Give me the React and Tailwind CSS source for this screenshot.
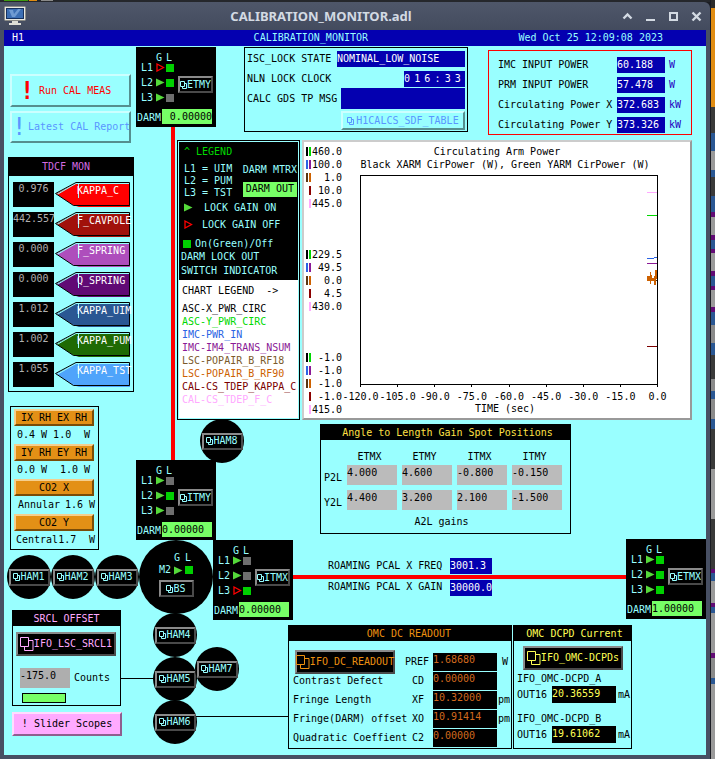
import React, { useState } from 'react';
import { clsx } from 'clsx';

const kappas = [
  { name: 'KAPPA_C', value: '0.976', fill: '#ff0000' },
  { name: 'F_CAVPOLE', value: '442.557', fill: '#a1110b' },
  { name: 'F_SPRING', value: '0.000', fill: '#ae4ebc' },
  { name: 'Q_SPRING', value: '0.000', fill: '#610a75' },
  { name: 'KAPPA_UIM', value: '1.012', fill: '#2a5793' },
  { name: 'KAPPA_PUM', value: '1.002', fill: '#1f6a04' },
  { name: 'KAPPA_TST', value: '1.055', fill: '#4fa4fb' },
];

const powers = [
  { label: 'IMC INPUT POWER', value: '60.188', unit: 'W' },
  { label: 'PRM INPUT POWER', value: '57.478', unit: 'W' },
  { label: 'Circulating Power X', value: '372.683', unit: 'kW' },
  { label: 'Circulating Power Y', value: '373.326', unit: 'kW' },
];

const chartLegend = [
  { name: 'ASC-X_PWR_CIRC', color: 'text-black' },
  { name: 'ASC-Y_PWR_CIRC', color: 'text-[#00d800]' },
  { name: 'IMC-PWR_IN', color: 'text-[#2a63e4]' },
  { name: 'IMC-IM4_TRANS_NSUM', color: 'text-[#8b1a96]' },
  { name: 'LSC-POPAIR_B_RF18', color: 'text-[#7b5a2b]' },
  { name: 'LSC-POPAIR_B_RF90', color: 'text-[#cd6100]' },
  { name: 'CAL-CS_TDEP_KAPPA_C', color: 'text-[#7b0000]' },
  { name: 'CAL-CS_TDEP_F_C', color: 'text-[#ffaaff]' },
];

const scaleBars = [
  ['bg-black', 'bg-[#00d800]'],
  ['bg-[#2a63e4]', 'bg-[#8b1a96]'],
  ['bg-[#5a3410]', 'bg-[#cd6100]'],
  ['bg-transparent', 'bg-[#8b0000]'],
  ['bg-transparent', 'bg-[#ffaaff]'],
];

const scales = [
  ['460.0', '100.0', '1.0', '10.0', '445.0'],
  ['229.5', '49.5', '0.0', '4.5', '430.0'],
  ['-1.0', '-1.0', '-1.0', '-1.0', '415.0'],
];

const times = ['-120.0', '-105.0', '-90.0', '-75.0', '-60.0', '-45.0', '-30.0', '-15.0', '0.0'];

const readouts = [
  { label: 'Contrast Defect', symbol: 'CD ', value: '0.00000', unit: '' },
  { label: 'Fringe Length', symbol: 'XF ', value: '10.32000', unit: 'pm' },
  { label: 'Fringe(DARM) offset', symbol: 'XO ', value: '10.91414', unit: 'pm' },
  { label: 'Quadratic Coeffient', symbol: 'C2 ', value: '0.00000', unit: '' },
];

// windows that peek out behind the right edge: [color, height]
const backdrop = [
  ['#2b2b2b', 8], ['#e08c12', 99], ['#3a3a3a', 26], ['#2a5793', 18], ['#9a9a9a', 19],
  ['#2a5793', 7], ['#3a3a3a', 19], ['#2a5793', 16], ['#610a75', 5], ['#9a9a9a', 18],
  ['#610a75', 5], ['#2a5793', 9], ['#610a75', 4], ['#9a9a9a', 18], ['#610a75', 5],
  ['#2a5793', 10], ['#610a75', 4], ['#9a9a9a', 17], ['#610a75', 5], ['#2a5793', 13],
  ['#8a8a8a', 18], ['#2a5793', 12], ['#3a3a3a', 24], ['#8a8a8a', 12], ['#2a5793', 8],
  ['#8a8a8a', 20], ['#2a5793', 10], ['#3a3a3a', 40], ['#9a9a9a', 50], ['#3a3a3a', 50],
  ['#610a75', 4], ['#2a5793', 8], ['#9a9a9a', 22], ['#610a75', 4], ['#2a5793', 6],
  ['#9a9a9a', 40], ['#610a75', 5], ['#8a8a8a', 20], ['#2a5793', 6], ['#9a9a9a', 75],
];

function DisplayIcon({ large }) {
  if (large) {
    return (
      <svg width="14" height="14" viewBox="0 0 14 14" fill="none" stroke="currentColor" className="shrink-0" aria-hidden="true">
        <path d="M.5 .5H8.5V9.5H.5ZM9 3.5H13V13.5H4.5V10" />
      </svg>
    );
  }
  return (
    <svg width="7" height="8" viewBox="0 0 7 8" fill="none" stroke="currentColor" className="shrink-0" aria-hidden="true">
      <path d="M.5 .5H4.5V5.5H.5ZM5 2.5H6.5V7.5H2.5V6" />
    </svg>
  );
}

function OpticButton({ name, className }) {
  return (
    <button
      className={clsx(
        'flex h-[17px] items-center justify-center border-2 border-t-[#8a8a8a] border-l-[#8a8a8a] border-r-[#4a4a4a] border-b-[#4a4a4a] bg-black text-[#99ffff]',
        className
      )}
    >
      <DisplayIcon />
      {name}
    </button>
  );
}

function GainArrow({ on }) {
  return (
    <svg width="9" height="9" viewBox="0 0 9 9" aria-hidden="true">
      {on ? (
        <path d="M0 .5L8.5 4.5L0 8.5Z" fill="#55d93a" />
      ) : (
        <path d="M1 1L7.5 4.5L1 8Z" fill="none" stroke="#ff0000" strokeWidth="1.3" />
      )}
    </svg>
  );
}

function Lamp({ on }) {
  return <span className={clsx('size-2', on ? 'bg-[#00d000]' : 'bg-[#6e6e6e]')} />;
}

function Suspension({ name, gains, locks, darm, align, className }) {
  return (
    <section className={clsx('absolute flex size-20 flex-col bg-black pt-1 text-[#99ffff]', className)}>
      <div className="flex items-end justify-between pr-[3px] pl-[5px]">
        <div>
          <div className="grid h-[9px] grid-cols-[14px_9px_8px] items-center gap-x-px">
            <span className="col-start-2">G</span>
            <span>L</span>
          </div>
          {gains.map((on, i) => (
            <div key={i} className="grid h-[15px] grid-cols-[14px_9px_8px] items-center gap-x-px">
              <span>L{i + 1}</span>
              <GainArrow on={on} />
              <Lamp on={locks[i]} />
            </div>
          ))}
        </div>
        <OpticButton name={name} className="mb-3 w-[35px]" />
      </div>
      <div className="mt-1 flex pl-px">
        <span className="w-[25px] leading-[18px]">DARM</span>
        <output className={clsx('h-[15px] w-[50px] bg-[#77ff66] leading-[15px] text-black', align)}>{darm}</output>
      </div>
    </section>
  );
}

function Chamber({ name, className }) {
  return (
    <div className={clsx('absolute flex size-11 items-center justify-center rounded-full bg-black', className)}>
      <OpticButton name={name} className="w-[41px] shrink-0" />
    </div>
  );
}

// interferometer: beams, chambers and suspensions placed on the canvas
function Interferometer() {
  return (
    <div className="absolute inset-0">
      <div className="absolute top-[81px] left-[167px] h-[333px] w-1 bg-[#ff0000]" />
      <div className="absolute top-[529px] right-[80px] left-[289px] h-1 bg-[#ff0000]" />
      <div className="absolute top-[632px] left-[117px] h-px w-[34px] bg-black" />
      <div className="absolute top-[670px] left-[192px] h-px w-[92px] bg-black" />

      <Chamber name="HAM8" className="top-[373px] left-[196px]" />
      <Chamber name="HAM1" className="top-[509px] left-[3px]" />
      <Chamber name="HAM2" className="top-[509px] left-[47px]" />
      <Chamber name="HAM3" className="top-[509px] left-[91px]" />
      <Chamber name="HAM4" className="top-[567px] left-[149px]" />
      <Chamber name="HAM5" className="top-[611px] left-[149px]" />
      <Chamber name="HAM6" className="top-[654px] left-[149px]" />
      <Chamber name="HAM7" className="top-[601px] left-[191px]" />

      <div className="absolute top-[494px] left-[135px] flex size-[74px] flex-col items-center rounded-full bg-black pt-3 text-[#99ffff]">
        <div className="grid grid-cols-[14px_10px_8px] items-center gap-x-px leading-[12px]">
          <span className="col-start-2">G</span>
          <span>L</span>
          <span>M2</span>
          <GainArrow on />
          <Lamp on />
        </div>
        <OpticButton name="BS" className="mt-1 w-[35px]" />
      </div>

      <Suspension name="ETMY" gains={[false, true, true]} locks={[true, true, false]} darm="0.00000" align="text-right" className="top-px left-[132px]" />
      <Suspension name="ITMY" gains={[true, true, true]} locks={[false, true, false]} darm="0.00000" className="top-[414px] left-[132px]" />
      <Suspension name="ITMX" gains={[true, true, false]} locks={[false, false, true]} darm="0.00000" className="top-[494px] left-[209px]" />
      <Suspension name="ETMX" gains={[true, true, true]} locks={[true, true, true]} darm="1.00000" className="top-[493px] right-0" />
    </div>
  );
}

function TitleBar() {
  return (
    <div>
      <div className="flex h-0.5 bg-[#25272c]">
        <span className="ml-1 h-px w-6 bg-[#3f9b12]" />
        <span className="ml-px h-px w-2 bg-[#e08c12]" />
        <span className="ml-1 h-px w-3 bg-[#8a8a8a]" />
      </div>
      <div className="relative flex h-7 items-center justify-between rounded-tr-md bg-linear-to-b from-[#4f576a] to-[#434b5e] px-1">
        <svg width="22" height="20" viewBox="0 0 22 20" aria-hidden="true">
          <rect x=".5" y=".5" width="21" height="14" rx="1" fill="#e8e8e0" stroke="#8c8c86" />
          <rect x="2" y="2" width="18" height="11" fill="#17325f" />
          <rect x="3" y="3" width="16" height="9" fill="#3c6fb4" />
          <path d="M5 4L9 4L10 8L14 3H17L11 11H8Z" fill="#6f9bd2" />
          <path d="M8 15H14V17H17V19H5V17H8Z" fill="#deded6" />
        </svg>
        <h1 className="pointer-events-none absolute inset-x-0 pr-[68px] text-center font-['Noto_Sans',sans-serif] text-[13px] font-bold text-[#d3dae3]">
          CALIBRATION_MONITOR.adl
        </h1>
        <div className="flex items-center gap-3 pr-1 text-[#d3dae3]">
          <button aria-label="Shade">
            <svg width="11" height="11" viewBox="0 0 11 11" fill="none" stroke="currentColor" strokeWidth="2.4"><path d="M1.5 7.5L5.5 3.5L9.5 7.5" /></svg>
          </button>
          <button aria-label="Minimize">
            <svg width="11" height="11" viewBox="0 0 11 11" fill="none" stroke="currentColor" strokeWidth="2"><path d="M1 9H10" /></svg>
          </button>
          <button aria-label="Maximize">
            <svg width="11" height="11" viewBox="0 0 11 11" fill="none" stroke="currentColor" strokeWidth="2"><path d="M2 2H9V9H2Z" /></svg>
          </button>
          <button aria-label="Close">
            <svg width="11" height="11" viewBox="0 0 11 11" fill="none" stroke="currentColor" strokeWidth="2.4"><path d="M1.5 1.5L9.5 9.5M9.5 1.5L1.5 9.5" /></svg>
          </button>
        </div>
      </div>
    </div>
  );
}

function TdcfPanel() {
  return (
    <section className="mt-3.5 ml-1 border border-black">
      <h2 className="h-[18px] bg-black pl-4 pr-[26px] text-center leading-[18px] text-[#d36be0]">TDCF MON</h2>
      <div className="flex flex-col gap-[5px] pt-[6px] pb-[4px] pl-1">
        {kappas.map((k) => (
          <div key={k.name} className="flex h-[25px] gap-px">
            <output className="w-[41px] bg-black text-center leading-[14px] text-[#b0b0b0]">{k.value}</output>
            <div className="relative flex-1">
              <svg width="77" height="25" viewBox="0 0 77 25" aria-hidden="true">
                <path d="M1 12L22 1H75V25H24L18 23Z" fill={k.fill} />
                <path d="M2 12.5L21 1.5H74" fill="none" stroke="#99ffff" />
                <path d="M.5 11.5L21 .5H74.500V23.500H18.500Z" fill="none" stroke="#000" />
                <path d="M23.500 2V16" stroke="#99ffff" />
              </svg>
              <span className="absolute inset-y-0 left-[22px] leading-[18px] text-white">{k.name}</span>
            </div>
          </div>
        ))}
      </div>
    </section>
  );
}

function HeaterButton({ children }) {
  return (
    <button className="block h-[17px] w-20 border-2 border-t-[#f5cf8e] border-l-[#f5cf8e] border-r-[#7a4c08] border-b-[#7a4c08] bg-[#e39016] leading-[13px] text-black">
      {children}
    </button>
  );
}

function HeaterPanel() {
  return (
    <section className="mt-3.5 ml-[6px] w-[89px] border border-black pt-0.5 pl-[3px]">
      <HeaterButton>IX RH EX RH</HeaterButton>
      <div className="flex h-[18px] items-center justify-between pr-2 pl-[3px]"><span>0.4 W 1.0</span><span>W</span></div>
      <HeaterButton>IY RH EY RH</HeaterButton>
      <div className="flex h-[18px] items-center justify-between pr-2 pl-[3px]"><span>0.0 W</span><span>1.0 W</span></div>
      <HeaterButton>CO2 X</HeaterButton>
      <div className="flex h-[18px] items-center justify-between pr-[3px] pl-1"><span>Annular</span><span>1.6 W</span></div>
      <HeaterButton>CO2 Y</HeaterButton>
      <div className="flex h-[18px] items-center justify-between pr-[3px] pl-0.5"><span>Central1.7</span><span>W</span></div>
    </section>
  );
}

function StatusPanel() {
  return (
    <section className="h-[85px] w-[224px] border border-black px-0.5">
      <div className="flex h-[22px] items-center justify-between">
        <span>ISC_LOCK STATE</span>
        <output className="h-4 w-[128px] bg-[#0400b0] leading-[15px] text-white">NOMINAL_LOW_NOISE</output>
      </div>
      <div className="flex h-[17px] items-center justify-between">
        <span>NLN LOCK CLOCK</span>
        <output className="grid h-4 w-[61px] grid-cols-6 bg-[#0400b0] leading-[15px] text-white">
          {['0', '1', '6', ':', '3', '3'].map((c, i) => (
            <span key={i}>{c}</span>
          ))}
        </output>
      </div>
      <div className="mt-px flex h-[21px] items-center justify-between">
        <span>CALC GDS TP MSG</span>
        <output className="h-[21px] w-[124px] bg-[#0400b0] text-white" />
      </div>
      <button className="mt-0.5 ml-auto flex h-[19px] w-[124px] items-center justify-center border-2 border-t-[#ccffff] border-l-[#ccffff] border-r-[#558f8f] border-b-[#558f8f] text-[#5a96ff]">
        <DisplayIcon />
        <span className="ml-0.5">H1CALCS_SDF_TABLE</span>
      </button>
    </section>
  );
}

function PowerPanel() {
  return (
    <section className="mt-[3px] h-[85px] w-[204px] border border-[#ff0000] pt-1 pl-[9px]">
      {powers.map((p) => (
        <div key={p.label} className="flex h-5 items-center">
          <span className="w-[119px]">{p.label}</span>
          <output className="h-4 w-12 bg-[#0400b0] leading-[15px] text-white">{p.value}</output>
          <span className="ml-1 text-[#2400c0]">{p.unit}</span>
        </div>
      ))}
    </section>
  );
}

function LegendPanel() {
  return (
    <section className="flex w-[123px] shrink-0 flex-col border border-black bg-[#99ffff] p-px">
      <div className="h-[138px] bg-black pt-[3px] text-[#99ffff]">
        <h2 className="pl-[5px] leading-[14px] text-[#00d800]">^ LEGEND</h2>
        <div className="mt-1 flex justify-between pr-px pl-[5px] leading-[12px]">
          <div>
            <p>L1 = UIM</p>
            <p>L2 = PUM</p>
            <p>L3 = TST</p>
          </div>
          <div>
            <p className="leading-[14px]">DARM MTRX</p>
            <p className="mt-[5px] h-[15px] bg-[#77ff66] pl-[3px] leading-[14px] text-black">DARM OUT</p>
          </div>
        </div>
        <p className="flex h-[17px] items-center gap-[11px] pl-[5px]"><GainArrow on />LOCK GAIN ON</p>
        <p className="flex h-[17px] items-center gap-[9px] pl-[5px]"><GainArrow />LOCK GAIN OFF</p>
        <p className="mt-[3px] flex h-[15px] items-center gap-1 pl-1"><Lamp on />On(Green)/Off</p>
        <p className="pl-0.5 leading-[12px]">DARM LOCK OUT</p>
        <p className="pl-0.5 leading-[16px]">SWITCH INDICATOR</p>
      </div>
      <div className="flex-1 bg-white pt-1 pl-[3px] leading-[13px]">
        <h2 className="mb-1 whitespace-pre leading-[14px] text-black">{'CHART LEGEND  ->'}</h2>
        <ul>
          {chartLegend.map((t) => (
            <li key={t.name} className={t.color}>{t.name}</li>
          ))}
        </ul>
      </div>
    </section>
  );
}

function ChartPanel() {
  return (
    <section className="flex min-w-0 flex-1 border-2 border-t-[#cccccc] border-l-[#cccccc] border-r-[#999999] border-b-[#999999] bg-white pt-[3px] pr-8 pl-0.5">
      <div className="flex w-[36px] shrink-0 flex-col gap-[38px]">
        {scales.map((group, g) => (
          <div key={g}>
            {group.map((v, i) => (
              <div key={i} className="flex h-[13px] items-center">
                <span className={clsx('mr-px h-[9px] w-0.5', scaleBars[i][0])} />
                <span className={clsx('h-[9px] w-0.5', scaleBars[i][1])} />
                <span className="flex-1 text-right">{v}</span>
              </div>
            ))}
          </div>
        ))}
      </div>
      <div className="ml-[18px] flex min-w-0 flex-1 flex-col">
        <div className="pr-2 text-center leading-[14px] whitespace-nowrap">
          <h2 className="pr-4 leading-[13px]">Circulating Arm Power</h2>
          <p>Black XARM CirPower (W), Green YARM CirPower (W)</p>
        </div>
        <div className="mt-[3px] flex h-[210px] justify-end border border-black">
          <svg width="10" height="208" viewBox="0 0 10 208" aria-hidden="true">
            <path d="M0 16.500H10" stroke="#ffaaff" />
            <path d="M0 39.500H10" stroke="#00d800" />
            <path d="M0 82.500H7M7 81.500H10" stroke="#2a63e4" />
            <path d="M0 87.500H10" stroke="#8b1a96" />
            <path d="M0 104.500H10" stroke="#5a3410" />
            <path d="M0 100H3V96H4V99H5V102H7V100H8V94H10V103H9V109H7V105H4V108H3V105H0Z" fill="#cd6100" />
            <path d="M0 170.500H10" stroke="#7b0000" />
          </svg>
        </div>
        <div className="flex h-0.5 justify-between">
          {times.map((t) => (
            <span key={t} className="w-px bg-black" />
          ))}
        </div>
        <div className="mt-1 flex justify-between leading-[12px]">
          {times.map((t) => (
            <span key={t} className="flex w-px justify-center">{t}</span>
          ))}
        </div>
        <p className="pr-2 text-center leading-[12px]">TIME (sec)</p>
      </div>
    </section>
  );
}

function GainTable() {
  const [gains, setGains] = useState({
    P2L: ['4.000', '4.600', '-0.800', '-0.150'],
    Y2L: ['4.400', '3.200', '2.100', '-1.500'],
  });

  const setGain = (row, i, value) => {
    setGains({ ...gains, [row]: gains[row].map((g, j) => (j === i ? value : g)) });
  };

  return (
    <section className="mt-1 ml-[186px] w-[251px] border border-black pb-1">
      <h2 className="h-[15px] bg-black pl-1 text-center leading-[16px] text-[#ffe045]">Angle to Length Gain Spot Positions</h2>
      <table className="mt-[9px] border-collapse">
        <thead>
          <tr className="h-4">
            <td />
            {['ETMX', 'ETMY', 'ITMX', 'ITMY'].map((h) => (
              <th key={h} scope="col" className="p-0 font-normal">{h}</th>
            ))}
          </tr>
        </thead>
        <tbody>
          {Object.keys(gains).map((row) => (
            <tr key={row}>
              <th scope="row" className="w-5 p-0 pl-[3px] text-left font-normal">{row}</th>
              {gains[row].map((g, i) => (
                <td key={i} className="p-0 pb-[5px] pl-[5px]">
                  <input
                    type="text"
                    aria-label={`${row} gain ${i + 1}`}
                    value={g}
                    onChange={(e) => setGain(row, i, e.target.value)}
                    className="block h-5 w-[50px] bg-[#bbbbbb] pb-[6px] leading-[14px]"
                  />
                </td>
              ))}
            </tr>
          ))}
        </tbody>
      </table>
      <p className="pr-2 text-center leading-[14px]">A2L gains</p>
    </section>
  );
}

function PcalReadings() {
  return (
    <div className="mt-6 ml-[194px] flex flex-col gap-[6px] leading-4">
      <div className="flex">
        <span className="w-[122px]">ROAMING PCAL X FREQ</span>
        <output className="w-[42px] bg-[#0400b0] text-white">3001.3</output>
      </div>
      <div className="flex">
        <span className="w-[122px] leading-[14px]">ROAMING PCAL X GAIN</span>
        <output className="w-[42px] bg-[#0400b0] text-white">30000.0</output>
      </div>
    </div>
  );
}

function SrclPanel() {
  const [offset, setOffset] = useState('-175.0');

  return (
    <div className="flex w-[110px] flex-col gap-[6px]">
      <section className="h-[96px] w-[109px] border border-black">
        <h2 className="h-[15px] bg-black text-center leading-[16px] text-[#ffaaff]">SRCL OFFSET</h2>
        <button className="mt-[6px] ml-[3px] flex h-6 w-[100px] items-center justify-center border-2 border-t-[#8a8a8a] border-l-[#8a8a8a] border-r-[#4a4a4a] border-b-[#4a4a4a] bg-black text-[#ffaaff]">
          <DisplayIcon large />
          IFO_LSC_SRCL1
        </button>
        <div className="mt-3 ml-[7px] flex items-center gap-1">
          <input
            id="srcl-offset"
            type="text"
            value={offset}
            onChange={(e) => setOffset(e.target.value)}
            className="h-5 w-[50px] bg-[#aeaeae] pb-[6px] leading-[14px]"
          />
          <label htmlFor="srcl-offset">Counts</label>
        </div>
        <div className="mt-[5px] ml-[9px] h-[10px] w-11 border border-black bg-[#77ff66]" />
      </section>
      <button className="h-6 border-2 border-t-[#ffddff] border-l-[#ffddff] border-r-[#8f5f8f] border-b-[#8f5f8f] bg-[#ffaaff] text-black">
        ! Slider Scopes
      </button>
    </div>
  );
}

function ReadoutPanel() {
  return (
    <section className="w-[224px] border border-black">
      <h2 className="h-[15px] bg-black pl-[18px] text-center leading-[16px] text-[#ec9010]">OMC DC READOUT</h2>
      <div className="pt-[11px] pl-1">
        <div className="flex h-[19px] items-center">
          <div className="flex w-[112px] pl-0.5">
            <button className="flex h-6 w-[100px] items-center justify-center border-2 border-t-[#8a8a8a] border-l-[#8a8a8a] border-r-[#4a4a4a] border-b-[#4a4a4a] bg-black text-[#ec9010]">
              <DisplayIcon large />
              IFO_DC_READOUT
            </button>
          </div>
          <span className="w-7">PREF</span>
          <output className="h-[18px] w-16 bg-black leading-[14px] text-[#d2691e]">1.68680</output>
          <span className="ml-[5px]">W</span>
        </div>
        {readouts.map((r) => (
          <div key={r.label} className="flex h-[19px] items-center">
            <span className="w-[119px]">{r.label}</span>
            <span className="w-[21px]">{r.symbol}</span>
            <output className="h-[18px] w-16 bg-black leading-[14px] text-[#d2691e]">{r.value}</output>
            <span className="ml-px">{r.unit}</span>
          </div>
        ))}
      </div>
    </section>
  );
}

function DcpdPanel() {
  return (
    <section className="w-[119px] border border-black">
      <h2 className="h-[15px] bg-black pl-1 text-center leading-[16px] text-[#ffff55]">OMC DCPD Current</h2>
      <button className="mt-[5px] ml-[9px] flex h-6 w-[100px] items-center justify-center border-2 border-t-[#8a8a8a] border-l-[#8a8a8a] border-r-[#4a4a4a] border-b-[#4a4a4a] bg-black text-[#ffff55]">
        <DisplayIcon large />
        IFO_OMC-DCPDs
      </button>
      <div className="flex flex-col gap-[9px] pt-[2px] pl-[3px]">
        {[['IFO_OMC-DCPD_A', '20.36559'], ['IFO_OMC-DCPD_B', '19.61062']].map(([name, value]) => (
          <div key={name}>
            <p className="leading-[14px]">{name}</p>
            <div className="flex h-[17px] items-center">
              <span className="w-[35px]">OUT16</span>
              <output className="h-[17px] w-16 bg-black leading-[15px] text-[#ffff55]">{value}</output>
              <span className="ml-0.5">mA</span>
            </div>
          </div>
        ))}
      </div>
    </section>
  );
}

function App() {
  return (
    <div className="flex min-h-screen bg-[#1b1d24] font-['DejaVu_Sans_Mono',monospace] text-[10px] leading-[14px] text-black">
      <div className="flex min-w-0 flex-1 flex-col">
        <TitleBar />
        <div className="flex flex-1 flex-col border-x-4 border-b-4 border-[#474f63]">
          <header className="grid h-4 grid-cols-3 items-center bg-[#0400b0] text-[#99ffff]">
            <span className="pl-2 text-white">H1</span>
            <span className="pr-[104px] text-right whitespace-nowrap">CALIBRATION_MONITOR</span>
            <span className="pr-[43px] text-right whitespace-nowrap">Wed Oct 25 12:09:08 2023</span>
          </header>

          <main className="relative flex-1 bg-[#99ffff]">
            <Interferometer />

            <div className="flex">
              <div className="z-10 w-[130px] shrink-0 pt-7">
                <button className="ml-[6px] flex h-[33px] w-[121px] items-center border-2 border-t-[#ccffff] border-l-[#ccffff] border-r-[#558f8f] border-b-[#558f8f] pl-2 text-[#ff0000]">
                  <span className="w-[19px] text-left text-2xl font-bold">!</span>
                  Run CAL MEAS
                </button>
                <button className="mt-1 ml-[6px] flex h-[32px] w-[121px] items-center border-2 border-t-[#ccffff] border-l-[#ccffff] border-r-[#558f8f] border-b-[#558f8f] whitespace-nowrap text-[#5a96ff]">
                  <span className="w-4 shrink-0 text-left text-2xl">!</span>
                  Latest CAL Report
                </button>
                <TdcfPanel />
                <HeaterPanel />
              </div>

              <div className="pointer-events-none z-10 flex min-w-0 flex-1 flex-col pt-px">
                <div className="pointer-events-auto flex justify-between pr-[14px] pl-[110px]">
                  <StatusPanel />
                  <PowerPanel />
                </div>
                <div className="mt-[5px] flex h-[280px] gap-0.5 pr-[14px] pl-[43px]">
                  <LegendPanel />
                  <ChartPanel />
                </div>
                <div className="pointer-events-auto">
                  <GainTable />
                </div>
                <PcalReadings />
              </div>
            </div>

            <div className="flex pt-[14px] pb-[6px] pl-2">
              <div className="z-10">
                <SrclPanel />
              </div>
              <div className="z-10 mt-[15px] ml-[166px] flex h-[124px] gap-px">
                <ReadoutPanel />
                <DcpdPanel />
              </div>
            </div>
          </main>
        </div>
      </div>
      <div className="relative w-[5px] shrink-0 overflow-hidden" aria-hidden="true">
        <div className="absolute inset-y-0 right-0 left-px">
          {backdrop.map(([color, height], i) => (
            <div key={i} style={{ backgroundColor: color, height }} />
          ))}
        </div>
      </div>
    </div>
  );
}

export default App;
